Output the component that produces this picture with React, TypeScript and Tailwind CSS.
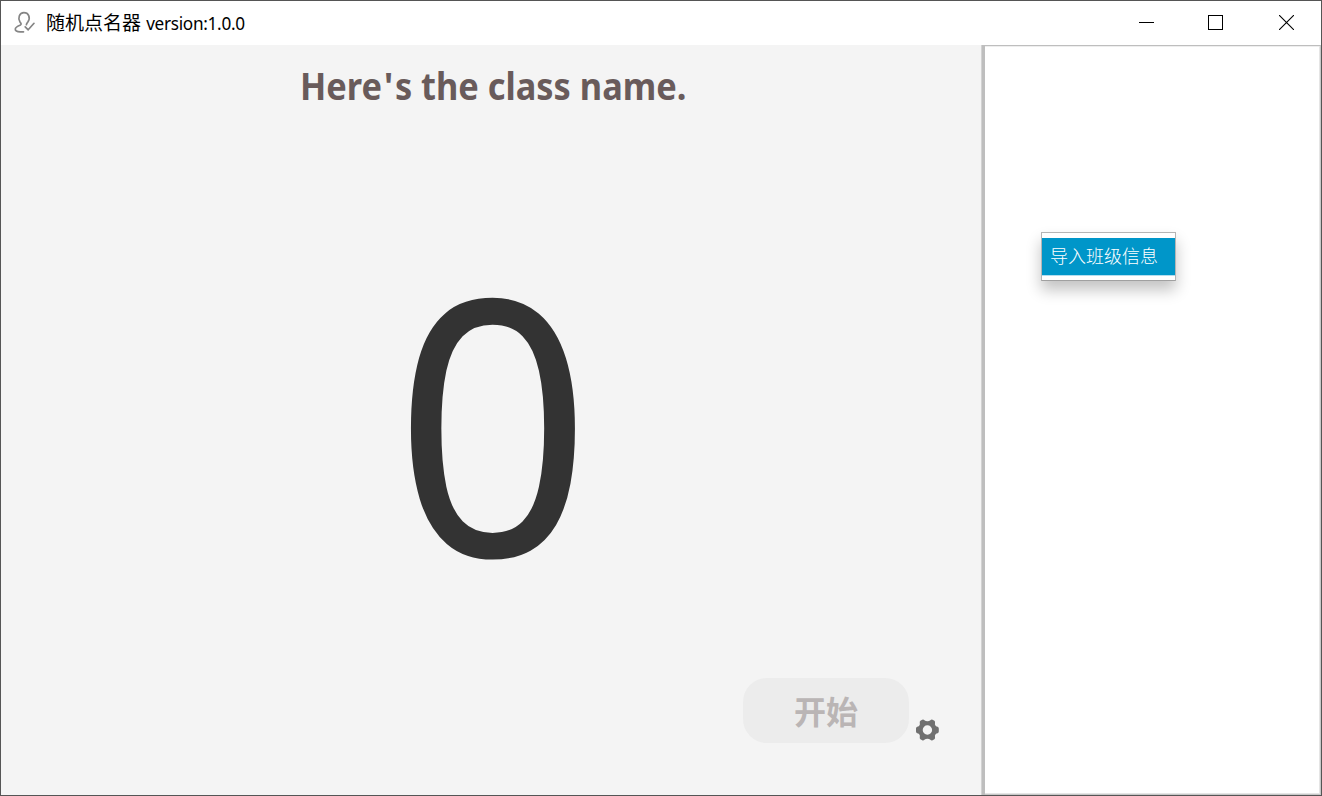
import React from "react";

function TitleBar() {
  return (
    <header className="flex h-11 shrink-0 items-center bg-white">
      <svg className="ml-3 size-6 shrink-0" viewBox="0 0 24 24" fill="none" stroke="#858585" strokeWidth="1.7" strokeLinecap="round" strokeLinejoin="round">
        <path d="M10.5 20.8H7.2C3.7 20.8 2.2 19.8 2.3 18C2.5 15.9 5 15 7.4 14C8.8 13.2 7.8 12.1 7 11C4.6 7.2 6.2 1.7 10.9 1.7C15.6 1.7 17.7 6.4 15 10.8C14.2 12 13.4 12.9 13.4 13.7" />
        <path d="M12.2 15.8L15.2 18.8L21 12.3" />
      </svg>
      <h1 className="ml-[9px] flex items-baseline whitespace-pre font-['Noto_Sans','Noto_Sans_CJK_SC',sans-serif] leading-6 text-black">
        <span className="w-[96px] text-[19px]">随机点名器</span>
        <span className="text-[17.2px] tracking-[-0.3px]"> version:1.0.0</span>
      </h1>
      <div className="ml-auto flex h-full items-center pb-px">
        <button aria-label="Minimize" className="flex h-full w-[69px] items-center justify-center">
          <svg width="15" height="15" viewBox="0 0 15 15" shapeRendering="crispEdges"><path d="M0 7.5H15" stroke="black" /></svg>
        </button>
        <button aria-label="Maximize" className="flex h-full w-[69px] items-center justify-center">
          <svg width="15" height="15" viewBox="0 0 15 15" shapeRendering="crispEdges"><rect x=".5" y=".5" width="14" height="14" fill="none" stroke="black" /></svg>
        </button>
        <button aria-label="Close" className="flex h-full w-[71px] items-center justify-center pl-px">
          <svg width="15" height="15" viewBox="0 0 15 15"><path d="M0 0L15 15M15 0L0 15" stroke="black" strokeWidth="1.1" /></svg>
        </button>
      </div>
    </header>
  );
}

function Gear() {
  return (
    <svg width="24" height="24" viewBox="-12.4 -12 24 24" fill="#707070">
      <path fillRule="evenodd" d="M-3 -9.8Q-1.8 -8.7 0 -8.7Q1.8 -8.7 3 -9.8Q4 -10.8 5.2 -10.2L7 -9.2Q8 -8.4 7.6 -7Q7.2 -5.5 8.2 -4.3Q9 -3.4 10.3 -3.2Q11.4 -2.8 11.4 -1.5V1.5Q11.4 2.8 10.3 3.2Q9 3.4 8.2 4.3Q7.2 5.5 7.6 7Q8 8.4 7 9.2L5.2 10.2Q4 10.8 3 9.8Q1.8 8.7 0 8.7Q-1.8 8.7 -3 9.8Q-4 10.8 -5.2 10.2L-7 9.2Q-8 8.4 -7.6 7Q-7.2 5.5 -8.2 4.3Q-9 3.4 -10.3 3.2Q-11.4 2.8 -11.4 1.5V-1.5Q-11.4 -2.8 -10.3 -3.2Q-9 -3.4 -8.2 -4.3Q-7.2 -5.5 -7.6 -7Q-8 -8.4 -7 -9.2L-5.2 -10.2Q-4 -10.8 -3 -9.8ZM4.7 0A4.7 4.7 0 1 0 -4.7 0A4.7 4.7 0 1 0 4.7 0Z" />
    </svg>
  );
}

export default function App() {
  return (
    <div className="flex h-[796px] w-[1322px] flex-col overflow-hidden border border-[#555555] bg-white">
      <TitleBar />
      <div className="flex min-h-0 flex-1">
        <main className="flex w-[980px] shrink-0 flex-col bg-[#f4f4f4]">
          <h2 className="ml-[299px] mt-4 h-[50px] origin-left scale-x-[0.929] whitespace-nowrap font-['Noto_Sans',sans-serif] text-[37px] font-bold leading-[50px] text-[#695b5b]">
            Here<span className="px-[2px]">'</span>s the class name.
          </h2>
          <div className="mt-[104px] flex h-[406px] scale-x-[0.972] items-center justify-center pl-1 font-['Noto_Sans',sans-serif] text-[356px] leading-[406px] text-[#333333]">
            0
          </div>
          <div className="ml-[742px] mt-[57px] flex">
            <button className="h-[65px] w-[166px] rounded-[24px] bg-[#ececec] font-['Noto_Sans_CJK_SC',sans-serif] text-[32px] font-bold leading-[65px] text-[#bab5b5]">
              开始
            </button>
            <button aria-label="Settings" className="ml-[6px] mt-[40px] size-6"><Gear /></button>
          </div>
        </main>
        <div className="w-1 shrink-0 border-l border-[#d2d2d2] bg-[#bebebe]" />
        <aside className="flex flex-1 items-start border-b border-r border-t border-b-[#c8c8c8] border-r-[#c8c8c8] border-t-[#bebebe] bg-white shadow-[inset_-1px_-1px_0_#e5e5e5,inset_0_1px_0_#eeeeee]">
          <div className="ml-14 mt-[186px] h-[49px] w-[135px] border border-[#b5b5b5] border-b-[#a0a0a0] bg-white pt-[5px] shadow-[0_9px_14px_rgba(0,0,0,0.24)]">
            <button className="flex h-[38px] w-full items-center border-b border-[#b3deef] bg-[#0096c9] pl-2 font-['Noto_Sans_CJK_SC',sans-serif] text-[18px] font-light text-white">
              <span className="-mt-0.5">导入班级信息</span>
            </button>
          </div>
        </aside>
      </div>
    </div>
  );
}
